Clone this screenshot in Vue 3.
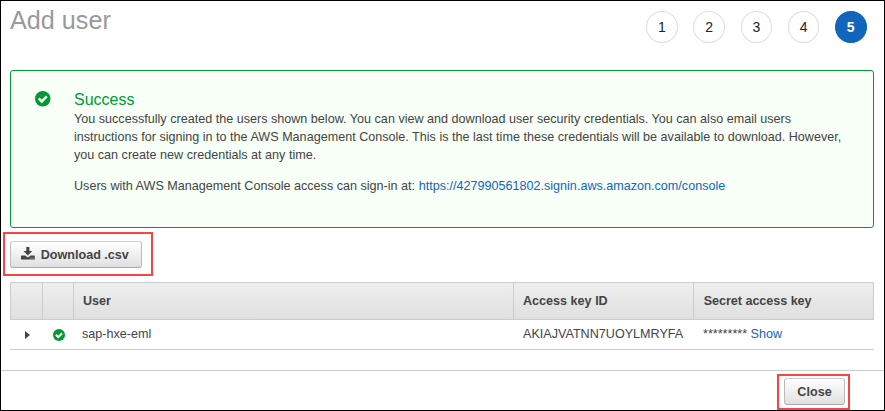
<script setup>
const steps = [1, 2, 3, 4, 5]
const current = 5
const users = [{ name: 'sap-hxe-eml', keyId: 'AKIAJVATNN7UOYLMRYFA', secret: '*********' }]
</script>

<template>
  <div class="frame">
    <header class="top">
      <h1>Add user</h1>
      <ol class="steps">
        <li v-for="s in steps" :key="s" :class="{ active: s === current }">{{ s }}</li>
      </ol>
    </header>

    <section class="alert">
      <svg class="check" viewBox="0 0 16 16">
        <circle cx="8" cy="8" r="8" fill="#009933" />
        <path d="M3.8 7.6 L7 10.8 L12.2 5.6" fill="none" stroke="#fff" stroke-width="2.6" />
      </svg>
      <div class="message">
        <h2>Success</h2>
        <p>
          You successfully created the users shown below. You can view and download user security credentials. You can also email users<br />
          instructions for signing in to the AWS Management Console. This is the last time these credentials will be available to download. However,<br />
          you can create new credentials at any time.
        </p>
        <p class="signin">Users with AWS Management Console access can sign-in at: <a>https://427990561802.signin.aws.amazon.com/console</a></p>
      </div>
    </section>

    <div class="highlight download">
      <button>
        <svg class="dl" viewBox="0 0 14 13">
          <path d="M5.3 0h3.1v4h2.9L6.9 8.6 2.5 4h2.8z" fill="#444" />
          <path d="M0.6 8.4h3.5l2.8 2.2 2.8-2.2h3.5q.6 0 .6.6v2.9q0 .6-.6.6H.6q-.6 0-.6-.6V9q0-.6.6-.6z" fill="#444" />
          <path d="M9.4 10.7h1.1v.9H9.4zM11.5 10.7h1.1v.9h-1.1z" fill="#eee" />
        </svg>
        <span>Download .csv</span>
      </button>
    </div>

    <div class="table">
      <div class="row head">
        <div></div>
        <div></div>
        <div>User</div>
        <div>Access key ID</div>
        <div class="secret-head">Secret access key</div>
      </div>
      <div v-for="u in users" :key="u.name" class="row body">
        <div><svg class="arrow" viewBox="0 0 5 8"><path d="M0 0L5 4 0 8z" fill="#444" /></svg></div>
        <div>
          <svg class="small-check" viewBox="0 0 16 16">
            <circle cx="8" cy="8" r="8" fill="#009933" />
            <path d="M3.8 7.6 L7 10.8 L12.2 5.6" fill="none" stroke="#fff" stroke-width="2.6" />
          </svg>
        </div>
        <div>{{ u.name }}</div>
        <div>{{ u.keyId }}</div>
        <div>{{ u.secret }}&nbsp;<a>Show</a></div>
      </div>
    </div>

    <footer>
      <div class="highlight close"><button>Close</button></div>
    </footer>
  </div>
</template>

<style>
body {
  margin: 0;
  background: #fff;
}
</style>

<style scoped>
* {
  box-sizing: border-box;
}
.frame {
  width: 885px;
  height: 411px;
  border: 1px solid #000;
  display: flex;
  flex-direction: column;
  overflow: hidden;
  background: #fff;
  color: #444;
  font: 12.6px/18px "Liberation Sans", Arial, sans-serif;
}
.top {
  height: 69px;
  flex: none;
  display: flex;
  justify-content: space-between;
  padding: 4px 17.5px 0 9px;
}
h1 {
  margin: 0;
  font-size: 25.2px;
  line-height: 30px;
  font-weight: 400;
  color: #999;
}
.steps {
  list-style: none;
  margin: 6px 0 0;
  padding: 0;
  display: flex;
  gap: 15.7px;
}
.steps li {
  width: 31.5px;
  height: 32px;
  border: 1px solid #ddd;
  border-radius: 50%;
  text-align: center;
  line-height: 30px;
  font-size: 14px;
  color: #222;
}
.steps li.active {
  background: #1166bb;
  border-color: #1166bb;
  color: #fff;
  font-weight: 700;
}
.alert {
  flex: none;
  width: 864px;
  height: 158px;
  margin-left: 9px;
  border: 1px solid #009933;
  border-radius: 3px;
  background: #f7fff7;
  display: flex;
  padding: 19px 0 0 24px;
}
.check {
  width: 15.5px;
  height: 15.5px;
  margin-top: 1px;
}
.message {
  margin-left: 23.5px;
  white-space: nowrap;
}
h2 {
  margin: 0;
  font-size: 16px;
  line-height: 20px;
  font-weight: 400;
  color: #009933;
}
p {
  margin: 0;
}
.signin {
  margin-top: 13px;
}
a {
  color: #1166bb;
}
.highlight {
  border: 2px solid #f94444;
  flex: none;
}
.download {
  width: 150px;
  height: 44px;
  margin: 4px 0 0 2px;
  padding: 7px 5px;
}
button {
  height: 27px;
  border: 1px solid #bbb;
  border-top-color: #ccc;
  border-bottom-color: #aaa;
  border-radius: 3px;
  background: linear-gradient(#fff, #e0e0e0);
  display: flex;
  align-items: center;
  justify-content: center;
  padding: 0;
  font: 700 12.6px/18px "Liberation Sans", Arial, sans-serif;
  color: #444;
}
.download button {
  width: 132px;
  justify-content: flex-start;
  padding-left: 10px;
}
.dl {
  width: 14px;
  height: 13px;
  margin: 0 5.7px 2px 0;
}
.table {
  width: 864px;
  flex: none;
  margin: 6px 0 0 9px;
}
.row {
  display: grid;
  grid-template-columns: 32px 31px 440px 180px 181px;
  align-items: center;
}
.head {
  height: 38px;
  border: 1px solid #ccc;
  background: linear-gradient(#eee, #e0e0e0);
  font-weight: 700;
  grid-template-columns: 32px 31px 440px 180px 179px;
}
.head > div {
  height: 36px;
  line-height: 36px;
  padding-left: 9px;
  border-right: 1px solid #ccc;
}
.head > div:last-child {
  border-right: 0;
}
.head > .secret-head {
  padding-left: 9.7px;
  letter-spacing: -0.04px;
}
.body {
  height: 30px;
  border-bottom: 1px solid #ccc;
  padding-bottom: 2px;
}
.body > div {
  padding-left: 9px;
  white-space: nowrap;
}
.body > div:first-child {
  padding-left: 14.5px;
}
.body > div:nth-child(2) {
  padding-left: 11px;
}
.body > div:nth-child(n + 4) {
  padding-left: 10px;
}
.arrow {
  display: block;
  width: 5px;
  height: 8px;
  margin-top: 2px;
}
.small-check {
  display: block;
  width: 12px;
  height: 12px;
  margin-top: 3px;
}
footer {
  margin-top: 20px;
  height: 40px;
  flex: none;
  border-top: 1px solid #ccc;
  display: flex;
  justify-content: flex-end;
  padding: 3px 34px 0 0;
}
.close {
  width: 73px;
  height: 36px;
  padding: 2px 5px;
}
.close button {
  width: 61px;
}
</style>
